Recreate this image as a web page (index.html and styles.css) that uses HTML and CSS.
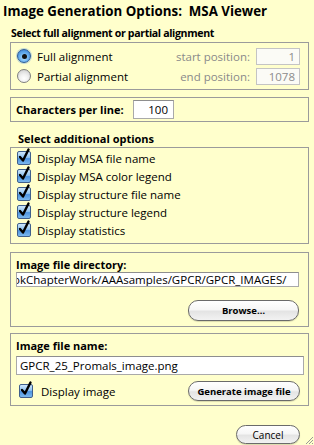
FILE: index.html
```html
<!DOCTYPE html>
<html>
<head>
<meta charset="utf-8">
<link rel="stylesheet" href="styles.css">
</head>
<body>
<div class="title">Image Generation Options:&nbsp; MSA Viewer</div>

<div class="label sec1-label">Select full alignment or partial alignment</div>
<div class="box box1">
  <div class="pos-row">
    <span class="radio on"></span><span class="rlabel">Full alignment</span>
    <span class="dim">start position:</span><span class="field disabled">1</span>
  </div>
  <div class="pos-row">
    <span class="radio"></span><span class="rlabel">Partial alignment</span>
    <span class="dim">end position:</span><span class="field disabled">1078</span>
  </div>
</div>

<div class="box box2">
  <span class="label">Characters per line:</span>
  <span class="field chars">100</span>
</div>

<div class="label sec3-label">Select additional options</div>
<div class="box box3">
  <div class="check-row"><span class="check"><svg viewBox="0 0 16 18" width="16" height="18"><path d="M4 10 L7 13.5 L12.5 2.5" fill="none" stroke="#000" stroke-width="2.4" stroke-linecap="round" stroke-linejoin="round"/></svg></span>Display MSA file name</div>
  <div class="check-row"><span class="check"><svg viewBox="0 0 16 18" width="16" height="18"><path d="M4 10 L7 13.5 L12.5 2.5" fill="none" stroke="#000" stroke-width="2.4" stroke-linecap="round" stroke-linejoin="round"/></svg></span>Display MSA color legend</div>
  <div class="check-row"><span class="check"><svg viewBox="0 0 16 18" width="16" height="18"><path d="M4 10 L7 13.5 L12.5 2.5" fill="none" stroke="#000" stroke-width="2.4" stroke-linecap="round" stroke-linejoin="round"/></svg></span>Display structure file name</div>
  <div class="check-row"><span class="check"><svg viewBox="0 0 16 18" width="16" height="18"><path d="M4 10 L7 13.5 L12.5 2.5" fill="none" stroke="#000" stroke-width="2.4" stroke-linecap="round" stroke-linejoin="round"/></svg></span>Display structure legend</div>
  <div class="check-row"><span class="check"><svg viewBox="0 0 16 18" width="16" height="18"><path d="M4 10 L7 13.5 L12.5 2.5" fill="none" stroke="#000" stroke-width="2.4" stroke-linecap="round" stroke-linejoin="round"/></svg></span>Display statistics</div>
</div>

<div class="box box4">
  <div class="label inner-label">Image file directory:</div>
  <div class="field wide dir">okChapterWork/AAAsamples/GPCR/GPCR_IMAGES/</div>
  <div class="btn-row"><span class="btn browse">Browse…</span></div>
</div>

<div class="box box5">
  <div class="label inner-label">Image file name:</div>
  <div class="field wide name">GPCR_25_Promals_image.png</div>
  <div class="bottom-row">
    <div class="check-row disp"><span class="check"><svg viewBox="0 0 16 18" width="16" height="18"><path d="M4 10 L7 13.5 L12.5 2.5" fill="none" stroke="#000" stroke-width="2.4" stroke-linecap="round" stroke-linejoin="round"/></svg></span>Display image</div>
    <span class="btn gen">Generate image file</span>
  </div>
</div>

<div class="cancel-row"><span class="btn cancel">Cancel</span></div>

<svg class="grip" width="10" height="10" viewBox="0 0 10 10"><path d="M9 2 L2 9 M9 5 L5 9 M9 8 L8 9" stroke="#999" stroke-width="1"/></svg>
</body>
</html>
```

FILE: styles.css
```css
html, body {
  margin: 0;
  padding: 0;
}
body {
  background: #ffffcc;
  font-family: "Open Sans", "DejaVu Sans", sans-serif;
  font-size: 11.5px;
  color: #000;
  width: 314px;
  height: 445px;
  overflow: hidden;
  position: relative;
}
.title {
  font-weight: bold;
  font-size: 13.3px;
  line-height: 17px;
  padding: 3px 0 0 3px;
  height: 20px;
}
.label {
  font-weight: bold;
  font-size: 11px;
}
.sec1-label {
  margin: 2px 0 0 11px;
  height: 17px;
  line-height: 17px;
  font-size: 10.6px;
  letter-spacing: -0.35px;
}
.box {
  border: 1px solid #9b9b9b;
  margin-left: 10px;
  width: 297px;
  box-sizing: content-box;
}
.box1 {
  height: 46px;
  padding: 0;
  display: flex;
  flex-direction: column;
  justify-content: center;
}
.pos-row {
  display: flex;
  align-items: center;
  height: 20px;
}
.radio {
  width: 14px;
  height: 14px;
  border-radius: 50%;
  margin-left: 6px;
  margin-right: 6px;
  box-sizing: border-box;
  border: 1px solid #7f7f7f;
  background: radial-gradient(circle at 50% 70%, #ffffff 0%, #f0f0f0 40%, #c8c8c8 100%);
  position: relative;
  flex: none;
}
.radio.on {
  border-color: #2a5a9a;
  background: radial-gradient(circle at 50% 65%, #b7e0ff 0%, #6cb2ef 45%, #2f79d0 100%);
  box-shadow: 0 0 0 1px rgba(90,150,220,0.35);
}
.radio.on::after {
  content: "";
  position: absolute;
  width: 5px;
  height: 5px;
  border-radius: 50%;
  background: #111;
  left: 3.5px;
  top: 3.5px;
}
.rlabel {
  flex: 1;
}
.dim {
  color: #8a8a8a;
  margin-right: 6px;
}
.field {
  background: #fff;
  border: 1px solid #a9a9a9;
  border-top-color: #8e8e8e;
  box-sizing: border-box;
  text-align: right;
  padding: 0 4px;
  white-space: nowrap;
  overflow: hidden;
}
.field.disabled {
  width: 44px;
  height: 17px;
  line-height: 15px;
  color: #8c8c8c;
  background: #fbfbf6;
  border-color: #c4c4c4;
  margin-right: 8px;
}
.box2 {
  margin-top: 7px;
  height: 23px;
  display: flex;
  align-items: center;
}
.box2 .label {
  margin-left: 5px;
  width: 117px;
}
.field.chars {
  width: 41px;
  height: 19px;
  line-height: 17px;
  padding-right: 5px;
}
.sec3-label {
  margin: 8px 0 0 18px;
  height: 17px;
  line-height: 17px;
}
.box3 {
  margin-top: 0;
  height: 97px;
  padding-top: 1px;
  box-sizing: border-box;
  width: 299px;
}
.check-row {
  display: flex;
  align-items: center;
  height: 18px;
  white-space: nowrap;
}
.check {
  width: 12px;
  height: 12px;
  margin-left: 6px;
  margin-right: 6px;
  border: 1px solid #3f5f8c;
  border-radius: 2px;
  background: linear-gradient(#cfe7fb 0%, #8fc3f1 45%, #4d94e0 55%, #7bb8ee 100%);
  position: relative;
  flex: none;
}
.check svg {
  position: absolute;
  left: -2px;
  top: -5px;
}
.box4 {
  margin-top: 8px;
  height: 73px;
  padding: 0 5px;
  width: 287px;
}
.inner-label {
  height: 15px;
  line-height: 15px;
  margin-top: 4px;
}
.field.wide {
  height: 15px;
  line-height: 13px;
  text-align: left;
  padding-left: 2px;
}
.field.dir {
  margin-top: 0;
  width: 283px;
  height: 15px;
  text-indent: -6px;
}
.btn-row {
  display: flex;
  justify-content: flex-end;
  margin-top: 13px;
  padding-right: 4px;
}
.btn {
  display: inline-flex;
  align-items: center;
  justify-content: center;
  border: 1px solid #6a6a6a;
  border-radius: 10px;
  background: linear-gradient(#ffffff 0%, #f6f6f6 45%, #e4e4e4 55%, #f2f2f2 100%);
  box-shadow: 0 1px 1px rgba(0,0,0,0.15);
  font-weight: bold;
  font-size: 9.5px;
  box-sizing: border-box;
  white-space: nowrap;
}
.browse {
  width: 111px;
  height: 21px;
}
.box5 {
  margin-top: 6px;
  height: 71px;
  padding: 0 5px;
  width: 287px;
}
.field.name {
  margin-top: 3px;
  width: 288px;
  height: 19px;
  line-height: 17px;
  padding-left: 3px;
}
.bottom-row {
  display: flex;
  align-items: center;
  justify-content: space-between;
  margin-top: 6px;
  padding-right: 3px;
  height: 20px;
}
.check-row.disp .check {
  margin-left: 3px;
  margin-right: 8px;
}
.gen {
  width: 112px;
  height: 20px;
}
.cancel-row {
  display: flex;
  justify-content: flex-end;
  margin-top: 19px;
  padding-right: 14px;
}
.cancel {
  width: 64px;
  height: 19px;
  font-weight: normal;
  font-size: 10px;
}
.grip {
  position: absolute;
  right: 0;
  bottom: 0;
}
```
